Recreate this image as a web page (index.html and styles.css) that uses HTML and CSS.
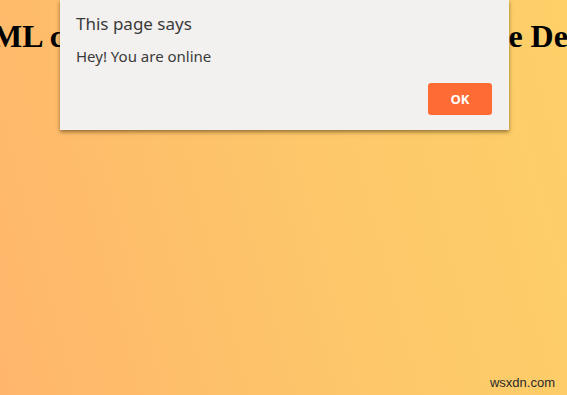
FILE: index.html
```html
<!DOCTYPE html>
<html>
<head>
<meta charset="utf-8">
<link rel="stylesheet" href="styles.css">
</head>
<body>
<div class="page">
  <div class="headline"><h1>HTML code to check internet status of the Device</h1></div>
  <div class="dialog">
    <div class="title">This page says</div>
    <div class="message">Hey! You are online</div>
    <div class="actions"><button class="ok">OK</button></div>
  </div>
  <div class="watermark">wsxdn.com</div>
</div>
</body>
</html>
```
FILE: styles.css
```css
html, body {
  margin: 0;
  height: 100%;
}
body {
  background: linear-gradient(75deg, #ffb66b 0%, #fdc76a 55%, #fdd068 100%);
  overflow: hidden;
}
.page {
  position: relative;
  width: 567px;
  height: 395px;
  overflow: hidden;
}
.headline {
  display: flex;
  justify-content: center;
  padding-top: 18px;
}
.headline h1 {
  margin: 0;
  white-space: nowrap;
  font-family: "Liberation Serif", serif;
  font-size: 32px;
  font-weight: bold;
  color: #000;
  line-height: 37px;
}
.dialog {
  position: absolute;
  left: 60px;
  top: 0;
  width: 449px;
  height: 130px;
  box-sizing: border-box;
  padding: 12px 16px 0 16px;
  background: #f2f1ef;
  box-shadow: 0 2px 4px rgba(60, 40, 0, 0.55);
  font-family: "Noto Sans", "Open Sans", sans-serif;
  color: #3a3a3a;
  display: flex;
  flex-direction: column;
}
.title {
  font-size: 17px;
  line-height: 24px;
}
.message {
  font-size: 15px;
  line-height: 20px;
  margin-top: 10px;
}
.actions {
  display: flex;
  justify-content: flex-end;
  margin-top: 17px;
}
.ok {
  width: 64px;
  height: 32px;
  border: none;
  border-radius: 3px;
  background: #fe6b35;
  color: #fff;
  font-family: "Open Sans", sans-serif;
  font-weight: bold;
  font-size: 13px;
  margin-right: 1px;
  padding: 0;
}
.watermark {
  position: absolute;
  right: 12px;
  bottom: 5px;
  font-family: "Liberation Sans", sans-serif;
  font-size: 13px;
  color: #2a2a2a;
}
```
